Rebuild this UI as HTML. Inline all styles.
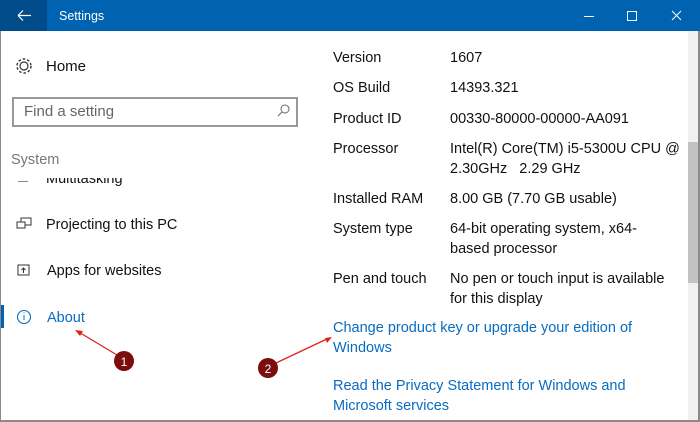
<!DOCTYPE html>
<html><head><style>
*{margin:0;padding:0;box-sizing:border-box}
body{width:700px;height:422px;overflow:hidden;background:#fff;font-family:"Liberation Sans",sans-serif;position:relative;color:#111}
.t{position:absolute;font-size:14.5px;white-space:nowrap;line-height:20px}
.blue{color:#0a6bc0}
.r{margin-top:1px}
</style></head><body>
<div style="position:absolute;left:0;top:0;width:700px;height:31px;background:#0063b1"></div>
<div style="position:absolute;left:0;top:0;width:47px;height:31px;background:#004c8a"></div>
<svg style="position:absolute;left:0;top:0" width="700" height="31">
<path d="M18 15.5h13M18 15.5l5-5M18 15.5l5 5" stroke="#fff" stroke-width="1.2" fill="none"/>
<path d="M584 16.5h10" stroke="#fff" stroke-width="1"/>
<rect x="627.5" y="11.5" width="9" height="9" stroke="#fff" fill="none"/>
<path d="M672 11l9 9M681 11l-9 9" stroke="#fff" stroke-width="1"/>
</svg>
<div class="t" style="left:59px;top:6px;color:#fff;font-size:12.5px">Settings</div>
<div style="position:absolute;left:0;top:31px;width:1px;height:391px;background:#8a8a8a"></div>
<div style="position:absolute;left:0;top:420px;width:700px;height:2px;background:#8a8a8a"></div>
<div style="position:absolute;left:698px;top:31px;width:2px;height:391px;background:#8a8a8a"></div>
<div style="position:absolute;left:688px;top:31px;width:10px;height:389px;background:#f0f0f0"></div>
<div style="position:absolute;left:688px;top:142px;width:10px;height:141px;background:#c2c2c2"></div>
<svg style="position:absolute;left:0;top:0" width="700" height="422">
<circle cx="24" cy="66" r="4" fill="none" stroke="#333" stroke-width="1.2"/>
<circle cx="24" cy="66" r="7" fill="none" stroke="#333" stroke-width="1.4" stroke-dasharray="2.5 2"/>
<circle cx="285" cy="109" r="4" fill="none" stroke="#666"/><path d="M282 112l-4 4" stroke="#666"/>
<rect x="21" y="218" width="10" height="7" fill="none" stroke="#333"/><rect x="17" y="222" width="8" height="6" fill="#fff" stroke="#333"/>
<rect x="18" y="265" width="11" height="10" fill="none" stroke="#333"/><path d="M23.5 273v-5M21.5 270l2-2 2 2" stroke="#333" fill="none"/>
<circle cx="24" cy="317" r="6.5" fill="none" stroke="#0a6bc0" stroke-width="1.1"/><path d="M24 315v5M24 312.5v1" stroke="#0a6bc0"/>
</svg>
<div style="position:absolute;left:12px;top:97px;width:286px;height:30px;border:2px solid #999"></div>
<div class="t" style="left:24px;top:102px;color:#666;font-size:15px">Find a setting</div>
<div class="t" style="left:46px;top:57px;font-size:15px">Home</div>
<div class="t" style="left:11px;top:150px;color:#777">System</div>
<div style="position:absolute;left:0;top:178px;width:320px;height:8px;overflow:hidden"><div class="t" style="left:46px;top:-9px">Multitasking</div><div style="position:absolute;left:18px;top:3px;width:10px;height:1px;background:#888"></div></div>
<div class="t" style="left:46px;top:215px">Projecting to this PC</div>
<div class="t" style="left:47px;top:261px">Apps for websites</div>
<div style="position:absolute;left:1px;top:305px;width:3px;height:23px;background:#0063b1"></div>
<div class="t blue" style="left:47px;top:308px">About</div>
<div style="position:absolute;left:320px;top:31px;width:360px;height:5px;overflow:hidden"><div class="t" style="left:13px;top:-15px">Edition</div><div class="t" style="left:130px;top:-15px">Windows 10 Pro</div></div>
<div class="t" style="left:333px;top:48px">Version</div><div class="t" style="left:450px;top:48px">1607</div>
<div class="t" style="left:333px;top:78px">OS Build</div><div class="t" style="left:450px;top:78px">14393.321</div>
<div class="t" style="left:333px;top:109px">Product ID</div><div class="t" style="left:450px;top:109px">00330-80000-00000-AA091</div>
<div class="t" style="left:333px;top:139px">Processor</div><div class="t" style="left:450px;top:139px">Intel(R) Core(TM) i5-5300U CPU @<br>2.30GHz &nbsp; 2.29 GHz</div>
<div class="t" style="left:333px;top:189px">Installed RAM</div><div class="t" style="left:450px;top:189px">8.00 GB (7.70 GB usable)</div>
<div class="t" style="left:333px;top:219px">System type</div><div class="t" style="left:450px;top:219px">64-bit operating system, x64-<br>based processor</div>
<div class="t" style="left:333px;top:269px">Pen and touch</div><div class="t" style="left:450px;top:269px">No pen or touch input is available<br>for this display</div>
<div class="t blue" style="left:333px;top:318px">Change product key or upgrade your edition of<br>Windows</div>
<div class="t blue" style="left:333px;top:376px">Read the Privacy Statement for Windows and<br>Microsoft services</div>
<svg style="position:absolute;left:0;top:0" width="700" height="422">
<path d="M117 355L77 331" stroke="#e02020" stroke-width="1.3"/><path d="M75 330l8 1-3 5z" fill="#e02020"/>
<path d="M276 363L329 338" stroke="#e02020" stroke-width="1.3"/><path d="M332 337l-5 6-2-5z" fill="#e02020"/>
<circle cx="124" cy="361" r="10" fill="#7a0e0e"/><text x="124" y="366" fill="#fff" font-size="12" text-anchor="middle" font-family="Liberation Sans">1</text>
<circle cx="268" cy="368" r="10" fill="#7a0e0e"/><text x="268" y="373" fill="#fff" font-size="12" text-anchor="middle" font-family="Liberation Sans">2</text>
</svg>
</body></html>
